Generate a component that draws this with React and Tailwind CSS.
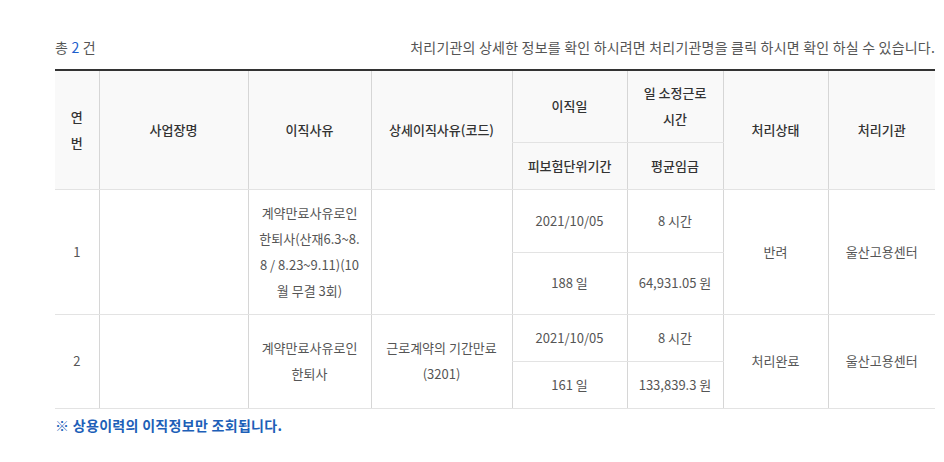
const FONT = { fontFamily: '"Noto Sans CJK KR", "Noto Sans", sans-serif' };

const th = "bg-[#f9f9f9] text-[#333] font-medium text-[13px] text-center align-middle border-b border-[#e3e3e3]";
const td = "text-[#555] text-[13px] text-center align-middle border-b border-[#e3e3e3]";
const vl = "border-l border-l-[#d6d6d6]";

function App() {
  return (
    <div className="w-[944px] h-[462px] bg-white" style={FONT}>
      <div className="ml-[55px] w-[880px] pt-[37px]">
        <div className="flex justify-between items-center h-5 text-[14px] text-[#555] leading-5 tracking-[0.2px]">
          <span>
            총 <span className="text-[#1d5fcc]">2</span> 건
          </span>
          <span>처리기관의 상세한 정보를 확인 하시려면 처리기관명을 클릭 하시면 확인 하실 수 있습니다.</span>
        </div>

        <table className="mt-3 w-[880px] table-fixed border-collapse border-t-2 border-t-[#333] leading-[26px]">
          <colgroup>
            <col className="w-[44px]" />
            <col className="w-[149px]" />
            <col className="w-[123px]" />
            <col className="w-[141px]" />
            <col className="w-[115px]" />
            <col className="w-[96px]" />
            <col className="w-[105px]" />
            <col className="w-[107px]" />
          </colgroup>
          <thead>
            <tr className="h-[72px]">
              <th rowSpan={2} className={th}>
                연<br />번
              </th>
              <th rowSpan={2} className={`${th} ${vl}`}>사업장명</th>
              <th rowSpan={2} className={`${th} ${vl}`}>이직사유</th>
              <th rowSpan={2} className={`${th} ${vl}`}>상세이직사유(코드)</th>
              <th className={`${th} ${vl}`}>이직일</th>
              <th className={`${th} ${vl}`}>
                일 소정근로
                <br />
                시간
              </th>
              <th rowSpan={2} className={`${th} ${vl}`}>처리상태</th>
              <th rowSpan={2} className={`${th} ${vl}`}>처리기관</th>
            </tr>
            <tr className="h-[47px]">
              <th className={`${th} ${vl}`}>피보험단위기간</th>
              <th className={`${th} ${vl}`}>평균임금</th>
            </tr>
          </thead>
          <tbody>
            <tr className="h-[63px]">
              <td rowSpan={2} className={td}>1</td>
              <td rowSpan={2} className={`${td} ${vl}`}></td>
              <td rowSpan={2} className={`${td} ${vl}`}>
                계약만료사유로인
                <br />
                한퇴사(산재6.3~8.
                <br />8 / 8.23~9.11)(10
                <br />월 무결 3회)
              </td>
              <td rowSpan={2} className={`${td} ${vl}`}></td>
              <td className={`${td} ${vl}`}>2021/10/05</td>
              <td className={`${td} ${vl}`}>8 시간</td>
              <td rowSpan={2} className={`${td} ${vl}`}>반려</td>
              <td rowSpan={2} className={`${td} ${vl}`}>울산고용센터</td>
            </tr>
            <tr className="h-[62px]">
              <td className={`${td} ${vl}`}>188 일</td>
              <td className={`${td} ${vl}`}>64,931.05 원</td>
            </tr>
            <tr className="h-[47px]">
              <td rowSpan={2} className={td}>2</td>
              <td rowSpan={2} className={`${td} ${vl}`}></td>
              <td rowSpan={2} className={`${td} ${vl}`}>
                계약만료사유로인
                <br />
                한퇴사
              </td>
              <td rowSpan={2} className={`${td} ${vl}`}>
                근로계약의 기간만료
                <br />
                (3201)
              </td>
              <td className={`${td} ${vl}`}>2021/10/05</td>
              <td className={`${td} ${vl}`}>8 시간</td>
              <td rowSpan={2} className={`${td} ${vl}`}>처리완료</td>
              <td rowSpan={2} className={`${td} ${vl}`}>울산고용센터</td>
            </tr>
            <tr className="h-[47px]">
              <td className={`${td} ${vl}`}>161 일</td>
              <td className={`${td} ${vl}`}>133,839.3 원</td>
            </tr>
          </tbody>
        </table>

        <p className="mt-[6px] text-[14px] leading-5 font-bold text-[#1d5fb8] tracking-[0.3px]">※ 상용이력의 이직정보만 조회됩니다.</p>
      </div>
    </div>
  );
}

export default App;
